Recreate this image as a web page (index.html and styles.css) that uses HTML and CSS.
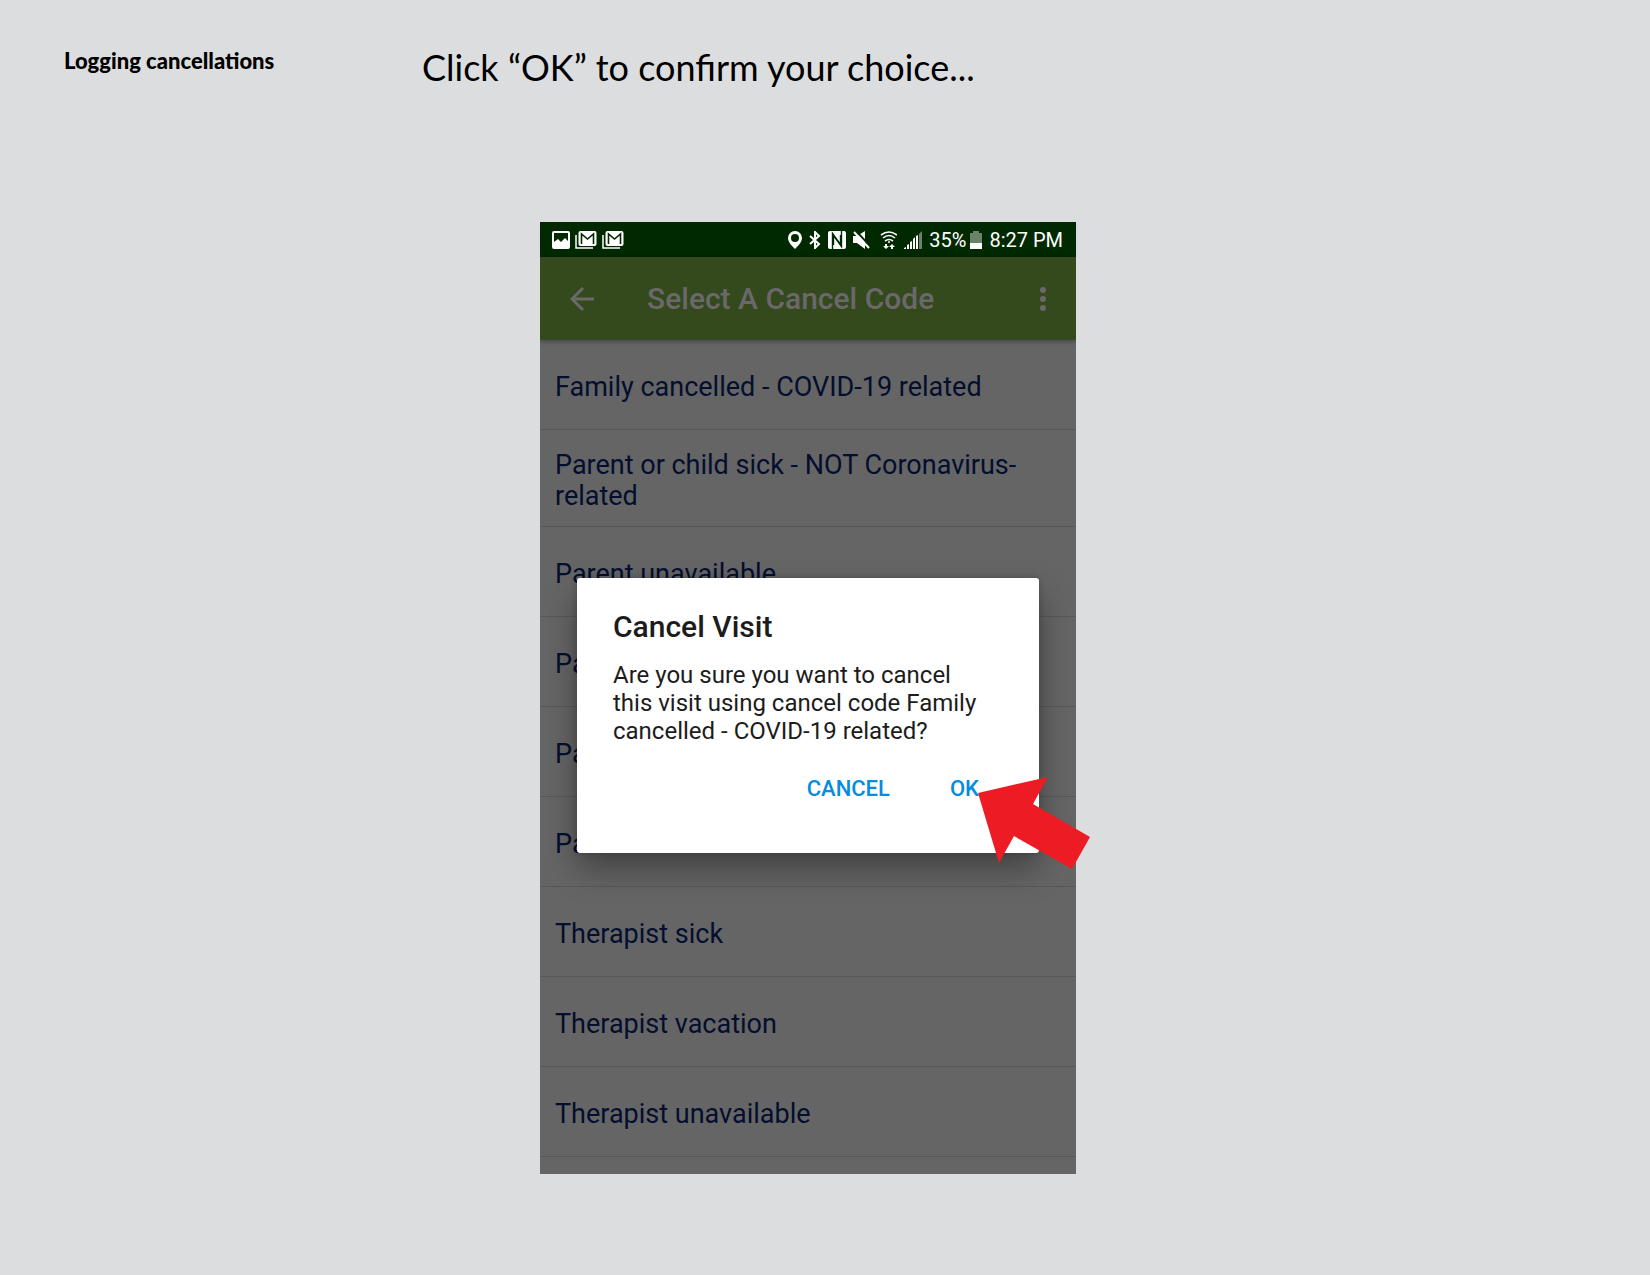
FILE: index.html
```html
<!DOCTYPE html>
<html lang="en">
<head>
    <meta charset="utf-8">
    <title>Logging cancellations</title>
    <link rel="stylesheet" href="styles.css">
</head>
<body>
    <div class="slide">
        <h1 class="section-name">Logging cancellations</h1>
        <main class="step">
            <p class="instruction">Click “OK” to confirm your choice...</p>

            <div class="phone">
                <div class="screen">
                    <div class="status-bar">
                        <svg width="18" height="18" viewBox="0 0 18 18">
                            <path fill="#fff" fill-rule="evenodd" d="M2 0h14q2 0 2 2v14q0 2-2 2H2q-2 0-2-2V2Q0 0 2 0zM2 2v9l4-3 3 3 4-4 3 3V2z"/>
                        </svg>
                        <svg width="22" height="18" viewBox="0 0 22 18">
                            <path fill="none" stroke="#fff" stroke-width="1.5" d="M1 4v13h17"/>
                            <rect x="3.5" y="0" width="18" height="15" rx="2" fill="#fff"/>
                            <path fill="none" stroke="#002900" stroke-width="1.6" d="M6.5 13V3l6 5 6-5v10"/>
                        </svg>
                        <svg width="22" height="18" viewBox="0 0 22 18">
                            <path fill="none" stroke="#fff" stroke-width="1.5" d="M1 4v13h17"/>
                            <rect x="3.5" y="0" width="18" height="15" rx="2" fill="#fff"/>
                            <path fill="none" stroke="#002900" stroke-width="1.6" d="M6.5 13V3l6 5 6-5v10"/>
                        </svg>
                        <div class="status-right">
                            <svg width="14" height="18" viewBox="0 0 14 18">
                                <path fill="#fff" fill-rule="evenodd" d="M7 0a7 7 0 0 1 7 7c0 4-4 8-7 11-3-3-7-7-7-11a7 7 0 0 1 7-7zm0 3a4 4 0 1 0 0 8 4 4 0 0 0 0-8z"/>
                            </svg>
                            <svg width="12" height="18" viewBox="0 0 12 18">
                                <path fill="none" stroke="#fff" stroke-width="2" d="M1 5l9 8-4 4V1l4 4-9 8"/>
                            </svg>
                            <svg width="18" height="18" viewBox="0 0 18 18">
                                <rect width="18" height="18" rx="2" fill="#fff"/>
                                <path fill="none" stroke="#002900" stroke-width="1.4" d="M4.5 18V2.5l8 11V4M13.5 0v15.5l-8-11V14"/>
                            </svg>
                            <svg width="17" height="18" viewBox="0 0 17 18">
                                <path fill="#fff" d="M0 5h4l8-5v18l-8-6H0z"/>
                                <path stroke="#002900" stroke-width="2" d="M3 0l14 15"/>
                                <path stroke="#fff" stroke-width="2" d="M1 1l15 16"/>
                            </svg>
                            <svg width="20" height="18" viewBox="0 0 20 18">
                                <path fill="none" stroke="#fff" stroke-width="1.6" d="M4 4q8-6 16 0M6 7q6-5 12 0M8 10q4-3 8 0"/>
                                <circle cx="12" cy="11" r="1" fill="#fff"/>
                                <path fill="#fff" d="M8 13h2v2h2l-3 3-3-3h2zM14 18h2v-2h2l-3-3-3 3h2z"/>
                            </svg>
                            <svg width="18" height="18" viewBox="0 0 18 18">
                                <path fill="#fff" d="M0 18v-1l2-1v2zM3 18v-4l2-1v5zM6 18v-7l2-1v8zM9 18V8l2-2v12zM12 18V5l2-1v14z"/>
                                <path fill="#6a826a" d="M15 18V3l3-3v18z"/>
                            </svg>
                            <span class="battery">35%
                                <svg width="12" height="18" viewBox="0 0 12 18">
                                    <path fill="#6a826a" d="M0 2h3V0h6v2h3v10H0z"/>
                                    <path fill="#fff" d="M0 12h12v6H0z"/>
                                </svg>
                            </span>
                            <span>8:27 PM</span>
                        </div>
                    </div>

                    <header class="app-bar">
                        <button class="icon-button" aria-label="Back">
                            <svg width="24" height="24" viewBox="0 0 24 24">
                                <path fill="none" stroke="#6a686b" stroke-width="3" d="M13 1L2 12l11 11M2 12h22"/>
                            </svg>
                        </button>
                        <h2 class="app-title">Select A Cancel Code</h2>
                        <button class="icon-button" aria-label="More options">
                            <svg width="6" height="24" viewBox="0 0 6 24">
                                <g fill="#6a686b">
                                    <circle cx="3" cy="3" r="3"/>
                                    <circle cx="3" cy="12" r="3"/>
                                    <circle cx="3" cy="21" r="3"/>
                                </g>
                            </svg>
                        </button>
                    </header>

                    <ul class="codes">
                        <li>Family cancelled - COVID-19 related</li>
                        <li>Parent or child sick - NOT Coronavirus-related</li>
                        <li>Parent unavailable</li>
                        <li>Pa</li>
                        <li>Pa</li>
                        <li>Pa</li>
                        <li>Therapist sick</li>
                        <li>Therapist vacation</li>
                        <li>Therapist unavailable</li>
                    </ul>

                    <div class="dialog" role="dialog" aria-labelledby="dialog-title">
                        <h3 class="dialog-title" id="dialog-title">Cancel Visit</h3>
                        <p class="dialog-text">Are you sure you want to cancel this visit using cancel code Family cancelled - COVID-19 related?</p>
                        <div class="dialog-buttons">
                            <button>CANCEL</button>
                            <button>OK</button>
                        </div>
                    </div>
                </div>

                <!-- red pointer at the OK button -->
                <svg class="pointer" width="112" height="93" viewBox="0 0 112 93">
                    <path fill="#ed1c24" d="M0 16L70 0 55 27l57 33-18 32-58-33-15 27z"/>
                </svg>
            </div>
        </main>
    </div>
</body>
</html>
```

FILE: styles.css
```css
body{
    margin: 0;
    background-color: #dcddde;
    color: #000;
    font-family: Roboto, sans-serif;
}
h1, h2, h3, p, ul{
    margin: 0;
    padding: 0;
}
svg{
    display: block;
    flex: none;
}
button{
    border: none;
    padding: 0;
    background: none;
    cursor: pointer;
}
.slide{
    display: grid;
    grid-template-columns: 358px minmax(0, 1fr);
    padding: 45px 64px 100px;
}
.section-name{
    font-family: Futura, Lato, sans-serif;
    font-size: 22px;
    line-height: 32px;
    font-weight: 900;
}
.instruction{
    font-family: Futura, Lato, sans-serif;
    font-size: 36px;
    line-height: 44px;
}
.phone{
    position: relative;
    max-width: 536px;
    margin: 133px 0 0 118px;
}
.screen{
    position: relative;
    overflow: hidden;
    background-color: #656565;
}

/* status bar */
.status-bar{
    display: flex;
    align-items: center;
    gap: 5px;
    height: 35px;
    padding: 0 13px 0 12px;
    background-color: #002900;
    color: #fff;
    font-size: 20px;
}
.status-right{
    display: flex;
    align-items: center;
    gap: 7px;
    margin-left: auto;
}
.battery{
    display: flex;
    align-items: center;
    gap: 4px;
}

/* app bar */
.app-bar{
    position: relative;
    display: flex;
    align-items: center;
    height: 83px;
    padding: 0 30px;
    background-color: #34491c;
    box-shadow: 0 1px 5px rgba(0, 0, 0, 0.4);
}
.app-title{
    flex: 1;
    padding-left: 53px;
    color: #6a686b;
    font-size: 30px;
    font-weight: 500;
}

/* list of cancel codes */
.codes{
    list-style: none;
    padding-bottom: 17px;
}
.codes li{
    display: flex;
    align-items: center;
    box-sizing: border-box;
    min-height: 90px;
    padding: 20px 15px 14px;
    border-bottom: 1px solid #585858;
    color: #040e2e;
    font-size: 27px;
    line-height: 31px;
}

/* dialog */
.dialog{
    position: absolute;
    top: 356px;
    left: 37px;
    right: 37px;
    padding: 32px 36px 46px;
    border-radius: 3px;
    background-color: #fff;
    box-shadow: 0 16px 32px rgba(0, 0, 0, 0.35), 0 0 6px rgba(0, 0, 0, 0.2);
}
.dialog-title{
    color: #1c1c1c;
    font-size: 30px;
    line-height: 34px;
    font-weight: 500;
}
.dialog-text{
    margin-top: 17px;
    padding-right: 24px;
    color: #1c1c1c;
    font-size: 24px;
    line-height: 28px;
}
.dialog-buttons{
    display: flex;
    justify-content: flex-end;
    gap: 60px;
    padding: 26px 24px 0 0;
}
.dialog-buttons button{
    color: #058ce1;
    font-family: Roboto, sans-serif;
    font-size: 22px;
    line-height: 36px;
    font-weight: 500;
}
.pointer{
    position: absolute;
    top: 555px;
    left: 438px;
}
```
